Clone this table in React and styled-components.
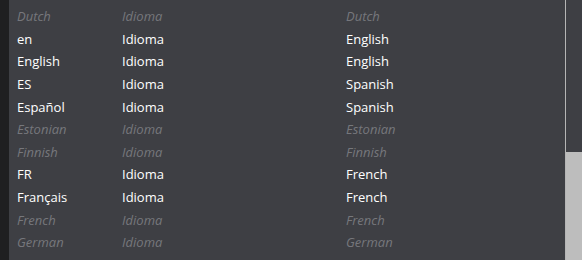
import styled, { createGlobalStyle } from "styled-components"

const GlobalStyle = createGlobalStyle`
  html, body {
    margin: 0;
    padding: 0;
    background: #3e3f44;
    overflow: hidden;
  }
`

const Shell = styled.div`
  width: 582px;
  height: 260px;
  display: flex;
  background: #3e3f44;
  overflow: hidden;
`

const SideStrip = styled.div`
  width: 9px;
  flex: none;
  background: #1f1f21;
`

const Table = styled.div`
  flex: 1;
  display: grid;
  grid-template-columns: 105px 224px 1fr;
  grid-auto-rows: 22.6px;
  align-content: start;
  padding: 5px 0 0 8px;
  font-family: "Open Sans", "Noto Sans", sans-serif;
  font-size: 13px;
`

const Row = styled.div`
  display: contents;
`

const Cell = styled.div`
  display: flex;
  align-items: center;
  white-space: nowrap;
  color: ${(p) => (p.$muted ? "#76777c" : "#ffffff")};
  font-style: ${(p) => (p.$muted ? "italic" : "normal")};
`

const Scrollbar = styled.div`
  width: 16px;
  flex: none;
  border-left: 1px solid #b5b5b5;
  display: flex;
  flex-direction: column;
`

const Track = styled.div`
  height: 152px;
  background: #3e3f44;
`

const Thumb = styled.div`
  flex: 1;
  background: #bdbdbd;
`

const rows = [
  ["Dutch", "Idioma", "Dutch", true],
  ["en", "Idioma", "English"],
  ["English", "Idioma", "English"],
  ["ES", "Idioma", "Spanish"],
  ["Español", "Idioma", "Spanish"],
  ["Estonian", "Idioma", "Estonian", true],
  ["Finnish", "Idioma", "Finnish", true],
  ["FR", "Idioma", "French"],
  ["Français", "Idioma", "French"],
  ["French", "Idioma", "French", true],
  ["German", "Idioma", "German", true],
]

export default function App() {
  return (
    <>
      <GlobalStyle />
      <Shell>
        <SideStrip />
        <Table>
          {rows.map(([a, b, c, muted], i) => (
            <Row key={i}>
              <Cell $muted={muted}>{a}</Cell>
              <Cell $muted={muted}>{b}</Cell>
              <Cell $muted={muted}>{c}</Cell>
            </Row>
          ))}
        </Table>
        <Scrollbar>
          <Track />
          <Thumb />
        </Scrollbar>
      </Shell>
    </>
  )
}
